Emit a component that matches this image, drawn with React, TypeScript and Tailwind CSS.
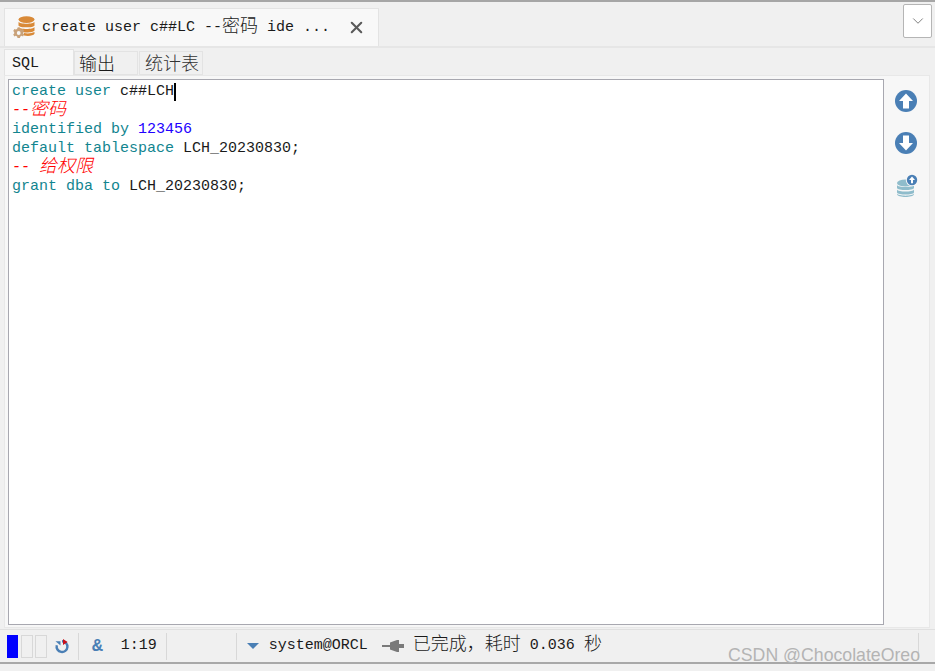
import type { ReactNode } from "react";
import { ChevronDown, X } from "lucide-react";

const MONO = "font-['Liberation_Mono','Noto_Sans_CJK_SC',monospace]";

function DbIcon() {
  return (
    <svg width="22" height="23" viewBox="0 0 22 23" className="shrink-0">
      <ellipse cx="13.5" cy="3.6" rx="8" ry="3.4" fill="#d98a38" />
      <path d="M5.5 5.8c1 2.6 15 2.6 16 0v3.6c-1 2.6-15 2.6-16 0z" fill="#d98a38" />
      <path d="M5.5 11c1 2.6 15 2.6 16 0v3.6c-1 2.6-15 2.6-16 0z" fill="#d98a38" />
      <path d="M11 17c3.5.8 7.5.4 10.500-1v1.800c-1 2-6 2.600-10.500 1.800z" fill="#d98a38" />
      <path
        d="M4.500 11.500h2.400l.4 1.400 1.400.7 1.300-.6 1.200 2-1 1 0 1.400 1 1-1.200 2-1.300-.6-1.400.7-.4 1.400H4.500l-.4-1.400-1.400-.7-1.300.6-1.200-2 1-1v-1.400l-1-1 1.200-2 1.300.6 1.400-.7z"
        fill="#c9a27a"
      />
      <circle cx="5.700" cy="17" r="1.900" fill="#f8f8f8" />
    </svg>
  );
}

function ArrowCircle({ up }: { up: boolean }) {
  return (
    <svg width="22" height="22" viewBox="0 0 22 22">
      <circle cx="11" cy="11" r="11" fill="#4a7fb5" />
      <path
        d={up ? "M11 3.500 18 11h-4v7.500H8V11H4z" : "M11 18.500 18 11h-4V3.500H8V11H4z"}
        fill="#fff"
      />
    </svg>
  );
}

function DbUpIcon() {
  return (
    <svg width="22" height="24" viewBox="0 0 22 24" className="ml-[2px]">
      <ellipse cx="9.500" cy="9" rx="8.500" ry="3.600" fill="#8fbccb" />
      <path d="M1 11c1 2.800 16 2.800 17 0v3c-1 2.800-16 2.800-17 0z" fill="#8fbccb" />
      <path d="M1 15.400c1 2.800 16 2.800 17 0v3c-1 2.800-16 2.800-17 0z" fill="#8fbccb" />
      <path d="M1 19.600c1 2.800 16 2.800 17 0v.6c-1 3.600-16 3.600-17 0z" fill="#8fbccb" />
      <circle cx="16" cy="6" r="6.200" fill="#f7f7f7" />
      <circle cx="16" cy="6" r="5.200" fill="#4a7fb5" />
      <path d="M16 2.400 19 6h-2v3.200h-2V6h-2z" fill="#fff" />
    </svg>
  );
}

function RefreshIcon() {
  return (
    <svg width="16" height="16" viewBox="0 0 16 16">
      <path d="M8 3.200a5.400 5.400 0 1 1-5.200 4" fill="none" stroke="#4a7fb5" strokeWidth="2.400" />
      <path d="M1.500 3.200h5v4.300z" fill="#4a7fb5" />
      <path d="M9 1v6l4.600-3z" fill="#c8101a" />
    </svg>
  );
}

function PinIcon() {
  return (
    <svg width="22" height="14" viewBox="0 0 22 14">
      <path d="M0 6h8v2H0z" fill="#7a7a7a" />
      <path d="M8 3.500 15 1h2v12h-2L8 10.500z" fill="#7a7a7a" />
      <path d="M17 5h5v4h-5z" fill="#7a7a7a" />
    </svg>
  );
}

// CJK runs are set larger than the latin text, as in the original editor font
function Cjk({ children }: { children: ReactNode }) {
  return <span className="align-[-1px] text-[18px] leading-[12px] font-light">{children}</span>;
}

export default function App() {
  const kw = "text-[#12858f]";
  const comment = "text-[#ff0000] italic";
  return (
    <div className={`flex h-[671px] w-[935px] flex-col overflow-hidden bg-[#f0f0f0] text-[#1a1a1a] ${MONO}`}>
      <div className="h-[2px] shrink-0 bg-[#a6a6a6]" />

      <div className="flex h-[46px] shrink-0 border-b-2 border-[#e6e6e6] pl-1 pt-[6px] pr-[3px]">
        <div className="flex h-[38px] w-[375px] items-center border border-b-0 border-[#e3e3e3] bg-[#f8f8f8] pl-[8px]">
          <DbIcon />
          <span className="ml-[7px] whitespace-nowrap text-[15px] leading-[15px]">
            create user c##LC --<Cjk>密码</Cjk> ide ...
          </span>
          <X size={19} strokeWidth={2.6} className="ml-[17px] text-[#595959]" />
        </div>
        <div className="ml-auto -mt-[4px] flex h-[34px] w-[29px] items-center justify-center rounded-[2px] border border-[#b5b5b5] bg-white">
          <ChevronDown size={18} strokeWidth={1} className="text-[#555555]" />
        </div>
      </div>

      <div className="flex h-[27px] shrink-0 items-end pl-1 text-[15px]">
        <div className="flex h-[26px] w-[70px] items-center border border-b-0 border-[#e3e3e3] bg-[#f8f8f8] pt-[3px] pl-[7px]">SQL</div>
        <div className="flex h-[24px] w-[64px] items-center border border-[#e3e3e3] bg-[#f0f0f0] pt-[4px] pl-[4px]"><Cjk>输出</Cjk></div>
        <div className="ml-px flex h-[24px] w-[64px] items-center border border-[#e3e3e3] bg-[#f0f0f0] pt-[4px] pl-[5px] text-[#333333]"><Cjk>统计表</Cjk></div>
      </div>

      <div className="ml-1 mr-[5px] flex h-[553px] shrink-0 border border-[#e8e8e8] bg-[#f7f7f7] pl-[3px] pt-[3px] pb-[2px]">
        <div className="h-full w-[876px] border border-[#a8a8b0] bg-white pl-[3px] pt-[2px] text-[15px] leading-[19px]">
          <div className="flex items-center whitespace-pre">
            <span className={kw}>create user </span>c##LCH
            <span className="h-[18px] w-[2px] bg-black" />
          </div>
          <div className={`whitespace-pre ${comment}`}>--<Cjk>密码</Cjk></div>
          <div className="whitespace-pre">
            <span className={kw}>identified by </span><span className="text-[#2200ff]">123456</span>
          </div>
          <div className="whitespace-pre">
            <span className={kw}>default tablespace </span>LCH_20230830;
          </div>
          <div className="whitespace-pre">
            <span className={comment}>-- <Cjk>给权限</Cjk></span>
          </div>
          <div className="whitespace-pre">
            <span className={kw}>grant dba to </span>LCH_20230830;
          </div>
        </div>
        <div className="flex flex-1 flex-col items-center gap-[20px] pt-[11px] pr-[2px]">
          <ArrowCircle up />
          <ArrowCircle up={false} />
          <DbUpIcon />
        </div>
      </div>

      <div className="mt-[1px] flex h-[33px] shrink-0 items-center border-t border-[#e0e0e0] pl-[7px] text-[15px]">
        <div className="h-[23px] w-[11px] bg-[#0000ff]" />
        <div className="ml-[3px] h-[23px] w-[12px] border border-[#d8d8d8]" />
        <div className="ml-[2px] h-[23px] w-[12px] border border-[#d8d8d8]" />
        <div className="ml-[7px]"><RefreshIcon /></div>
        <div className="ml-[8px] h-[27px] w-px bg-[#d8d8d8]" />
        <span className="ml-[13px] text-[18px] font-bold leading-none text-[#4a7fb5]">&amp;</span>
        <span className="ml-[18px]">1:19</span>
        <div className="ml-[9px] h-[27px] w-px bg-[#d8d8d8]" />
        <div className="ml-[69px] h-[27px] w-px bg-[#d8d8d8]" />
        <span className="ml-[10px] h-0 w-0 border-x-[6px] border-t-[6px] border-x-transparent border-t-[#4a7fb5]" />
        <span className="ml-[10px]">system@ORCL</span>
        <span className="ml-[14px]"><PinIcon /></span>
        <span className="ml-[9px] whitespace-pre"><Cjk>已完成，耗时</Cjk> 0.036 <Cjk>秒</Cjk></span>
        <div className="ml-auto mr-[16px] h-[27px] w-px bg-[#d8d8d8]" />
      </div>

      <div className="relative flex-1 border-t-2 border-[#a8a8a8]">
        <span className="absolute right-[15px] -top-[17px] font-['Liberation_Sans',sans-serif] text-[17.7px] leading-none text-[#b4b4b4]">
          CSDN @ChocolateOreo
        </span>
      </div>
    </div>
  );
}
